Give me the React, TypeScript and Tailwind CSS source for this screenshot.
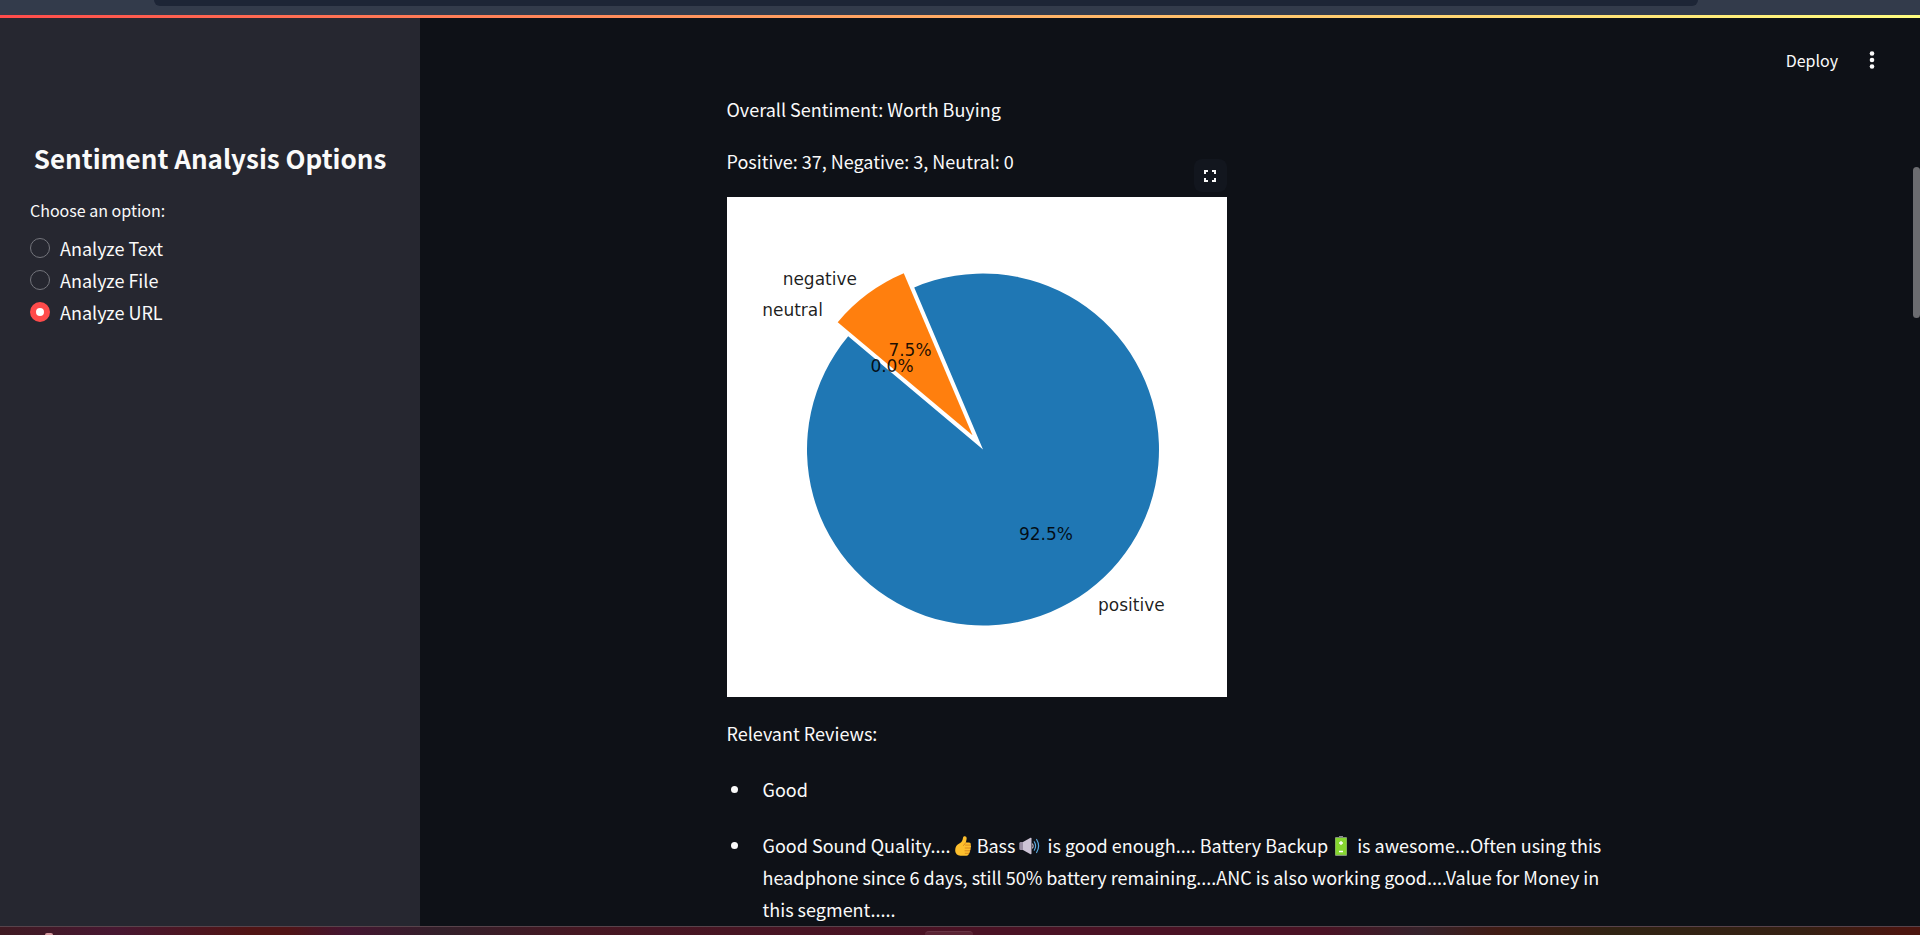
import { useState } from "react";

const OPTIONS = ["Analyze Text", "Analyze File", "Analyze URL"];

function BrowserEdge() {
  return (
    <div className="flex h-[15px] shrink-0 items-start bg-[#333b4b] pl-[154px] pr-[222px]">
      <div className="h-[6px] flex-1 rounded-b-[14px] bg-[#1d2536]" />
    </div>
  );
}

function Sidebar() {
  const [selected, setSelected] = useState("Analyze URL");
  return (
    <aside className="w-[420px] shrink-0 bg-[#262730] px-[30px] pt-[122px]">
      <h2 className="text-center text-[26px] font-bold leading-9 whitespace-nowrap">
        Sentiment Analysis Options
      </h2>
      <fieldset className="mt-5">
        <legend className="text-base leading-7">Choose an option:</legend>
        <div className="mt-2">
          {OPTIONS.map((option) => (
            <label key={option} className="flex h-8 items-center gap-[10px] text-lg">
              <input
                type="radio"
                name="mode"
                value={option}
                checked={selected === option}
                onChange={() => setSelected(option)}
                className="size-5 appearance-none rounded-full border border-[#74757c] bg-[#262730] checked:border-[6px] checked:border-[#ff4b4b] checked:bg-white"
              />
              {option}
            </label>
          ))}
        </div>
      </fieldset>
    </aside>
  );
}

const CX = 256;
const CY = 252.5;
const R = 176;

function wedge(from: number, to: number, explode: number) {
  const rad = (deg: number) => (deg * Math.PI) / 180;
  const mid = rad((from + to) / 2);
  const x = CX + explode * R * Math.cos(mid);
  const y = CY - explode * R * Math.sin(mid);
  const px = (deg: number) => x + R * Math.cos(rad(deg));
  const py = (deg: number) => y - R * Math.sin(rad(deg));
  const large = to - from > 180 ? 1 : 0;
  return `M${x} ${y}L${px(from)} ${py(from)}A${R} ${R} 0 ${large} 0 ${px(to)} ${py(to)}Z`;
}

function PieChart() {
  return (
    <svg
      viewBox="0 0 500 500"
      role="img"
      aria-label="Sentiment distribution"
      className="block size-[500px] bg-white font-['DejaVu_Sans',sans-serif] text-[17px]"
    >
      <path d={wedge(140, 473, 0)} fill="#1f77b4" />
      <path d={wedge(113, 140, 0.1)} fill="#ff7f0e" />
      <g fill="#000" fillOpacity="0.88">
        <text x="371" y="414">positive</text>
        <text x="319" y="343" textAnchor="middle">92.5%</text>
        <text x="130" y="88" textAnchor="end">negative</text>
        <text x="183" y="159" textAnchor="middle">7.5%</text>
        <text x="96" y="119" textAnchor="end">neutral</text>
        <text x="165" y="175" textAnchor="middle">0.0%</text>
      </g>
    </svg>
  );
}

function ThumbsUp() {
  return (
    <svg viewBox="0 0 16 20" role="img" aria-label="thumbs up" className="mr-[6px] inline-block h-5 w-4 align-[-3px]">
      <path d="M9.2 0.3c1.6-.4 2.7.8 2.4 2.6L10.900 6.500H14c1.500 0 2.200 1.400 1.500 2.600.8.9.7 2.200-.1 2.900.5 1 .2 2.200-.6 2.800.4 1-.1 2.100-.9 2.500 0 1.500-.9 2.400-2.400 2.400H5.500C2.300 19.700.2 17.500.2 14.300c0-3.400 1.400-5.500 4.500-7.100C7 5.900 7.600 4.100 8 1.700c.1-.8.500-1.200 1.200-1.400z" fill="#fdbf2d" />
      <path d="M15.500 9.100H10.600M15.400 12H10.200M14.800 14.800H10M13.900 17.300H10.200M10.900 6.500L8.500 9.500" stroke="#d6851e" strokeWidth="0.9" fill="none" strokeLinecap="round" />
    </svg>
  );
}

function Speaker() {
  return (
    <svg viewBox="0 0 21 18" role="img" aria-label="loud speaker" className="ml-1 mr-[3px] inline-block h-[18px] w-[21px] align-[-2px]">
      <path d="M1.500 5H5v8H1.500Q.3 13 .3 11.500v-5Q.3 5 1.500 5z" fill="#998ea4" />
      <path d="M4 5l7.500-4.200Q12.500.5 12.500 1.500v15q0 1-1 .7L4 13z" fill="#cdc4d6" />
      <path d="M13.200 6.500q2 2.500 0 5" fill="none" stroke="#b4acbc" strokeWidth="1.200" />
      <path d="M15.300 4.800q2.600 4.200 0 8.400M17.600 2.500q4 6.500 0 13" fill="none" stroke="#5aa9e0" strokeWidth="1.200" strokeLinecap="round" />
    </svg>
  );
}

function Battery() {
  return (
    <svg viewBox="0 0 12 20" role="img" aria-label="battery" className="ml-[3px] mr-[6px] inline-block h-5 w-3 align-[-3px]">
      <path d="M4 0h4v2H4z" fill="#8d8d93" />
      <rect y="1" width="12" height="19" rx="1" fill="#7f8f78" />
      <rect x="0.500" y="2" width="11" height="16.800" fill="#86d72f" />
      <path d="M6 5v4M4 7h4M4 15.500h4" stroke="#fff" strokeWidth="1.300" />
    </svg>
  );
}

function Header() {
  return (
    <header className="flex h-[75px] items-center justify-end gap-6 pt-[9px] pr-[31px]">
      <button type="button" className="text-base">Deploy</button>
      <button type="button" aria-label="Main menu" className="flex h-8 w-5 items-center justify-center">
        <svg viewBox="0 0 6 20" className="h-5 w-[6px]" fill="#fafafa">
          <circle cx="3" cy="3.500" r="2.300" />
          <circle cx="3" cy="10" r="2.300" />
          <circle cx="3" cy="16.500" r="2.300" />
        </svg>
      </button>
    </header>
  );
}

function Results() {
  return (
    <div className="mx-auto w-full max-w-[880px] text-lg leading-8">
      <p>Overall Sentiment: Worth Buying</p>
      <p className="mt-5">Positive: 37, Negative: 3, Neutral: 0</p>
      <div className="relative mt-5 w-[500px]">
        <PieChart />
        <button
          type="button"
          aria-label="View fullscreen"
          className="absolute -top-[38px] right-0 flex size-[33px] items-center justify-center rounded-lg bg-[#12161e]"
        >
          <svg viewBox="0 0 12 12" className="size-3" fill="none" stroke="#fafafa" strokeWidth="2">
            <path d="M1 4V1h3M8 1h3v3M11 8v3H8M4 11H1V8" />
          </svg>
        </button>
      </div>
      <p className="mt-5">Relevant Reviews:</p>
      <ul className="mt-6 flex list-none flex-col gap-6">
        <li className="flex">
          <Bullet />
          <span>Good</span>
        </li>
        <li className="flex">
          <Bullet />
          <span>
            Good Sound Quality.... <ThumbsUp />Bass<Speaker /> is good enough.... Battery Backup <Battery /> is
            awesome...Often using this headphone since 6 days, still 50% battery remaining....ANC is also working
            good....Value for Money in this segment.....
          </span>
        </li>
      </ul>
    </div>
  );
}

function Bullet() {
  return (
    <span className="flex h-8 w-9 shrink-0 items-center pl-1">
      <span className="size-[7px] rounded-full bg-[#fafafa]" />
    </span>
  );
}

function Taskbar() {
  return (
    <footer className="flex h-[9px] shrink-0 items-end overflow-hidden border-t border-[#57434b] bg-[linear-gradient(90deg,#3f1a22_0%,#471731_6%,#501414_13%,#501416_15%,#441530_18%,#33202a_23%,#451722_30%,#4a1224_50%,#4a1224_69%,#35222b_74%,#401b14_78%,#302313_84%,#352013_94%,#4b150f_99%)]">
      <div className="flex-1 pl-[45px]">
        <div className="h-[2px] w-2 rounded-t-full bg-[#d59a9f]" />
      </div>
      <div className="h-1 w-12 rounded-t border-t border-[#693545] bg-[#5a2434]" />
      <div className="flex-1 pr-[67px]" />
    </footer>
  );
}

export default function App() {
  return (
    <div className="flex h-screen flex-col overflow-hidden bg-[#0e1117] font-['Noto_Sans_CJK_SC','Source_Sans_Pro',sans-serif] text-[#fafafa]">
      <BrowserEdge />
      <div className="h-[3px] shrink-0 bg-linear-to-r from-[#ff4b4b] to-[#fffd80]" />
      <div className="flex min-h-0 flex-1">
        <Sidebar />
        <main className="min-w-0 flex-1 overflow-hidden">
          <Header />
          <Results />
        </main>
        <div className="w-[7px] shrink-0 pt-[149px]">
          <div className="h-[151px] rounded-full bg-[#6b6c70]" />
        </div>
      </div>
      <Taskbar />
    </div>
  );
}
